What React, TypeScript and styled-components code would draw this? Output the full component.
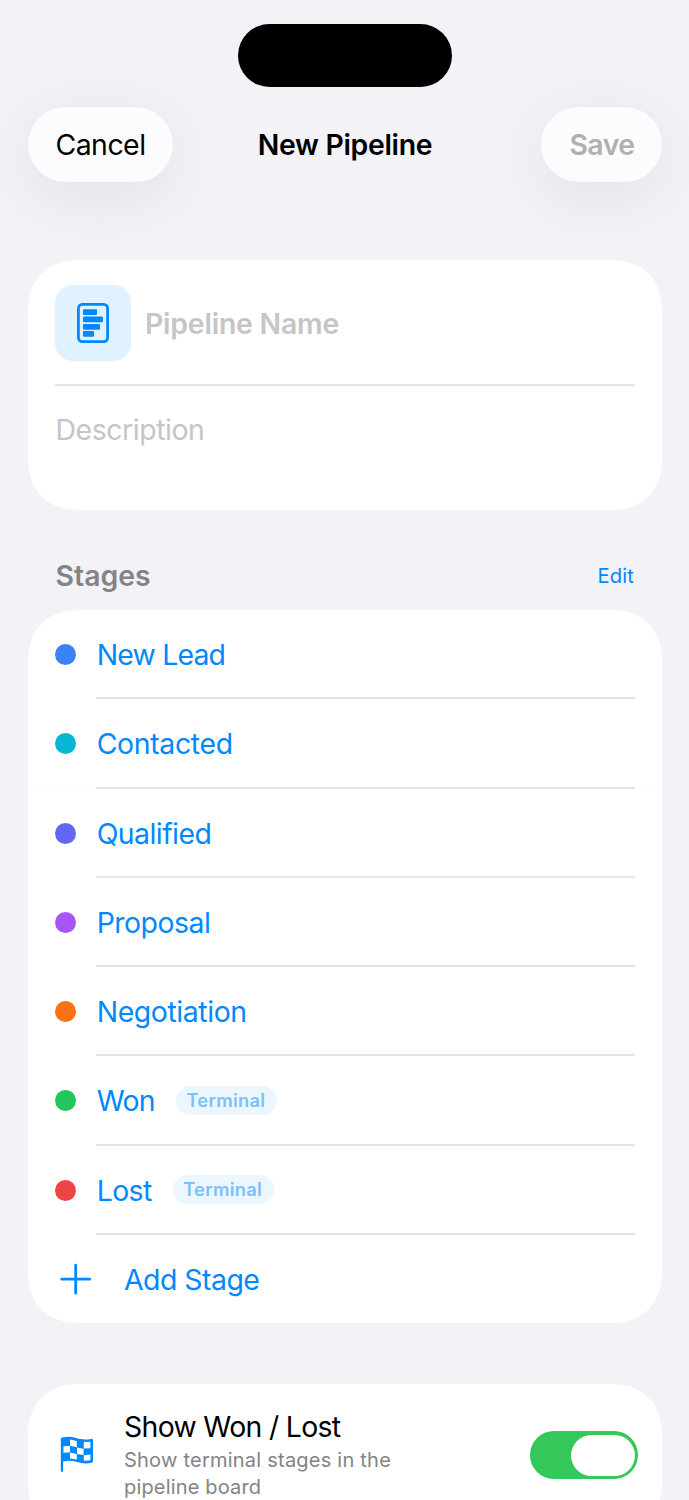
import React from "react";
import styled, { createGlobalStyle } from "styled-components";

const BLUE = "#0088ff";

const GlobalStyle = createGlobalStyle`
  * { box-sizing: border-box; }
  html, body { margin: 0; background: #f2f2f7; }
  body { height: 1500px; overflow: hidden; font-family: Inter, "Liberation Sans", sans-serif; }
  button { font: inherit; border: 0; background: none; padding: 0; }
`;

const Screen = styled.main`
  width: 689px;
  height: 1500px;
  overflow: hidden;
  padding: 24px 27px 0 28px;
  background: #f2f2f7;
  font-size: 28.4px;
  color: #000;
`;

const Island = styled.div`
  width: 214.5px;
  height: 63px;
  margin: 0 0 0 209.5px;
  border-radius: 32px;
  background: #000;
`;

const NavBar = styled.header`
  display: grid;
  grid-template-columns: 1fr auto 1fr;
  align-items: center;
  height: 75px;
  margin-top: 20px;
`;

const Label = styled.span<{ $tracking?: number }>`
  letter-spacing: ${(p) => p.$tracking ?? -0.5}px;
  white-space: nowrap;
`;

const NavButton = styled.button<{ $width: number; $muted?: boolean }>`
  width: ${(p) => p.$width}px;
  height: 75px;
  justify-self: ${(p) => (p.$muted ? "end" : "start")};
  padding-left: ${(p) => (p.$muted ? 1 : 0)}px;
  border-radius: 38px;
  background: #fcfcfe;
  box-shadow: 0 14px 68px rgba(0, 0, 0, 0.08);
  color: ${(p) => (p.$muted ? "#b0b0b1" : "#000")};
  font-weight: ${(p) => (p.$muted ? 600 : 400)};
`;

const Title = styled.h1`
  margin: 0;
  font-size: 28.4px;
  font-weight: 600;
`;

const Card = styled.section<{ $top: number; $height: number }>`
  height: ${(p) => p.$height}px;
  margin-top: ${(p) => p.$top}px;
  padding: 0 27px;
  border-radius: 46px;
  background: #fff;

  @supports (corner-shape: superellipse(1.2)) {
    border-radius: 52px;
    corner-shape: superellipse(1.2);
  }
`;

const NameRow = styled.div`
  display: flex;
  align-items: center;
  height: 126px;
  padding-top: 2px;
  border-bottom: 2px solid #e6e6e6;
  color: #c5c5c7;
  font-weight: 600;
`;

const IconTile = styled.div`
  display: grid;
  place-items: center;
  width: 75.5px;
  height: 75.5px;
  margin-right: 14.5px;
  border-radius: 18px;
  background: #e0f1ff;
`;

const Description = styled.div`
  padding: 27px 0 0 0.5px;
  line-height: 34px;
  color: #c5c5c7;
`;

const SectionHeader = styled.div`
  display: flex;
  align-items: center;
  justify-content: space-between;
  height: 40px;
  margin: 45px 0 15px;
  padding: 0 28px 0 27.5px;
  color: #838388;
  font-weight: 600;
`;

const EditButton = styled.button`
  color: ${BLUE};
  font-size: 20.2px;
  font-weight: 400;
`;

const StageRow = styled.div<{ $seam?: boolean }>`
  display: flex;
  height: 89.25px;
  margin: 0 -27px;
  padding: 0 27px;
  box-shadow: ${(p) => (p.$seam ? "inset 0 -1px #f9f9fa" : "none")};
  color: ${BLUE};
`;

const Dot = styled.i<{ $color: string }>`
  width: 21px;
  height: 21px;
  margin: 34px 20px 0 0;
  border-radius: 50%;
  background: ${(p) => p.$color};
`;

const StageBody = styled.div`
  flex: 1;
  display: flex;
  align-items: center;
  padding: 2px 0 0 0.7px;
  border-bottom: 2px solid #e5e5e5;
`;

const Badge = styled.span`
  display: flex;
  align-items: center;
  justify-content: center;
  width: 101px;
  height: 29px;
  margin: -1px 0 0 21px;
  padding: 0 1px 1px 0;
  border-radius: 15px;
  background: #ebf6ff;
  color: #7ac1ff;
  font-size: 18.3px;
  font-weight: 600;
`;

const AddRow = styled.div`
  display: flex;
  align-items: center;
  height: 89px;
  padding-left: 5px;
  color: ${BLUE};
  svg { margin-right: 32px; }
`;

const ToggleRow = styled.div`
  display: flex;
  padding: 26px 0 0 5px;
`;

const FlagIcon = styled.svg`
  margin: 26px 30px 0 0;
`;

const ToggleText = styled.div`
  display: flex;
  flex-direction: column;
  flex: 1;
  line-height: 34px;
`;

const Caption = styled.p`
  margin: 2.5px 0 0;
  color: #838386;
  font-size: 20px;
  line-height: 27.5px;
`;

const Switch = styled.div`
  display: flex;
  justify-content: flex-end;
  width: 108px;
  height: 48px;
  margin: 21px -3px 0 0;
  padding: 3.5px;
  border-radius: 24px;
  background: #34c759;
`;

const Knob = styled.div`
  width: 64px;
  height: 41px;
  border-radius: 21px;
  background: #fff;
`;

interface Stage {
  name: string;
  color: string;
  tracking: number;
  terminal?: boolean;
  seam?: boolean;
}

const stages: Stage[] = [
  { name: "New Lead", color: "#3b82f6", tracking: -0.8 },
  { name: "Contacted", color: "#06b6d4", tracking: -0.33, seam: true },
  { name: "Qualified", color: "#6366f1", tracking: -0.55 },
  { name: "Proposal", color: "#a855f7", tracking: -0.5 },
  { name: "Negotiation", color: "#f97316", tracking: -0.4 },
  { name: "Won", color: "#22c55e", tracking: -0.7, terminal: true },
  { name: "Lost", color: "#ef4444", tracking: -0.6, terminal: true },
];

export default function App() {
  return (
    <Screen>
      <GlobalStyle />
      <Island />
      <NavBar>
        <NavButton $width={145}><Label>Cancel</Label></NavButton>
        <Title><Label $tracking={-0.3}>New Pipeline</Label></Title>
        <NavButton $width={121} $muted><Label>Save</Label></NavButton>
      </NavBar>

      <Card $top={78} $height={250}>
        <NameRow>
          <IconTile>
            <svg width="32" height="40" viewBox="0 0 32 40" fill={BLUE}>
              <rect x="1.4" y="1.4" width="29.2" height="37.2" rx="4" fill="none" stroke={BLUE} strokeWidth="2.8" />
              <rect x="6" y="6.3" width="14" height="5.8" rx="1" />
              <rect x="6" y="13.5" width="20" height="5.8" rx="1" />
              <rect x="6" y="20.9" width="17" height="5.8" rx="1" />
              <rect x="6" y="28" width="11" height="5.8" rx="1" />
            </svg>
          </IconTile>
          <Label $tracking={-0.2}>Pipeline Name</Label>
        </NameRow>
        <Description><Label $tracking={-0.43}>Description</Label></Description>
      </Card>

      <SectionHeader>
        <Label $tracking={0}>Stages</Label>
        <EditButton><Label $tracking={0.1}>Edit</Label></EditButton>
      </SectionHeader>

      <Card $top={0} $height={713}>
        {stages.map((s) => (
          <StageRow key={s.name} $seam={s.seam}>
            <Dot $color={s.color} />
            <StageBody>
              <Label $tracking={s.tracking}>{s.name}</Label>
              {s.terminal && <Badge><Label $tracking={0.3}>Terminal</Label></Badge>}
            </StageBody>
          </StageRow>
        ))}
        <AddRow>
          <svg width="32" height="32" viewBox="0 0 32 32" stroke={BLUE} strokeWidth="2.8" strokeLinecap="round">
            <path d="M15.700 2.200v28M1.700 16.200h28" />
          </svg>
          <Label>Add Stage</Label>
        </AddRow>
      </Card>

      <Card $top={61} $height={150}>
        <ToggleRow>
          <FlagIcon width="34" height="37" viewBox="0 0 34 37">
            <path
              d="M.8 34.800V3.600C.8 2.600 1.300 2 2.200 1.600 6.500.2 11.500.6 16 2c5.500 1.700 10 1.700 15.200.9 1.100-.2 1.800.4 1.800 1.500v20.300c0 1-.5 1.700-1.500 2-5 1.300-9.500.8-14.500-.7-4.500-1.400-9-1.700-13.900-.6v9.400a1.150 1.150 0 0 1-2.300 0z"
              fill={BLUE}
            />
            <path
              d="M10 3.600l6.800 1.300v6.300L10 9.800zM23.800 6.100l6.600-.3v6.500l-6.600.3zM3.400 10.300L10 9.900v6.400l-6.600.4zM17 11.500l6.600 1.300v6.300L17 17.900zM10 16.600l6.800 1.400v5.600L10 22.400zM23.800 19.200l6.600-.7v5.800l-6.600.4z"
              fill="#fff"
            />
          </FlagIcon>
          <ToggleText>
            <Label $tracking={-0.68}>Show Won / Lost</Label>
            <Caption>
              <Label $tracking={0.23}>Show terminal stages in the</Label>
              <br />
              <Label $tracking={0.17}>pipeline board</Label>
            </Caption>
          </ToggleText>
          <Switch><Knob /></Switch>
        </ToggleRow>
      </Card>
    </Screen>
  );
}
